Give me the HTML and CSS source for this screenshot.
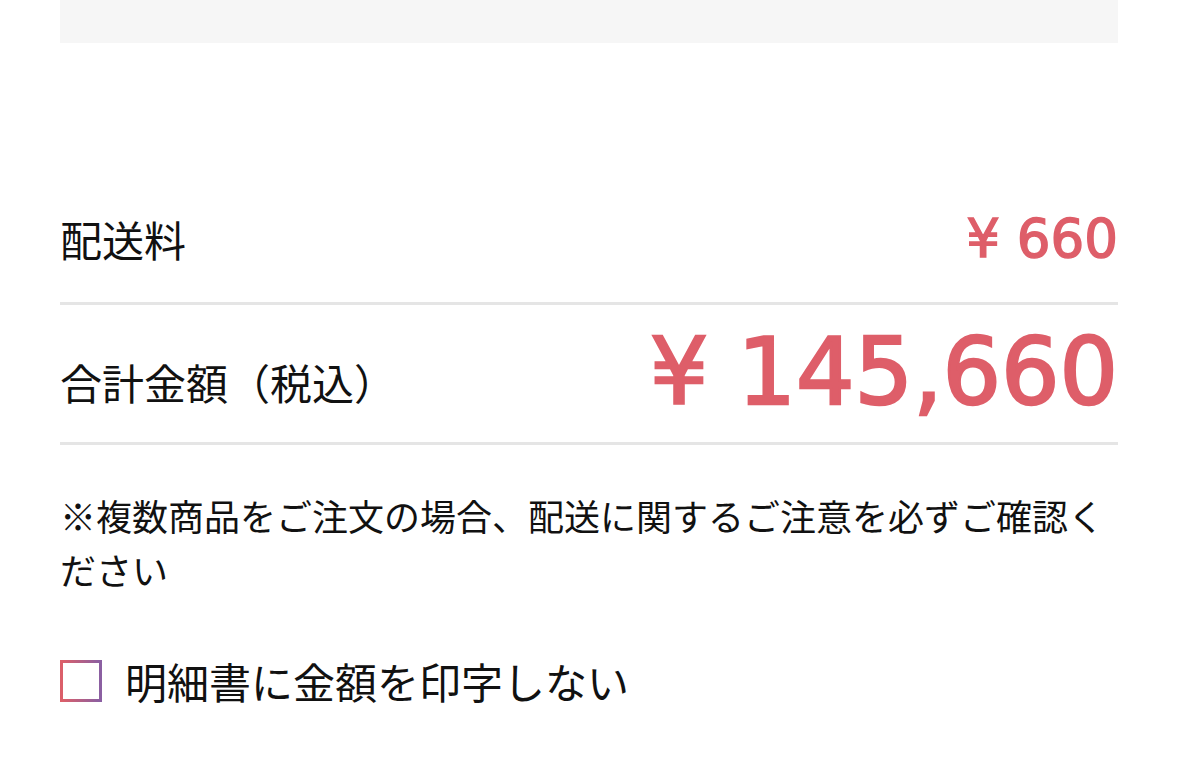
FILE: index.html
```html
<!DOCTYPE html>
<html lang="ja">
  <head>
    <meta charset="UTF-8" />
    <title>ご注文内容の確認</title>
    <link rel="stylesheet" href="styles.css">
  </head>
  <body>
    <div class="page">
      <!-- bottom of the box above -->
      <div class="upper-box"></div>

      <div class="summary">
        <div class="summary-row shipping">
          <span class="summary-label">配送料</span>
          <span class="summary-price">¥ 660</span>
        </div>
        <div class="summary-row total">
          <span class="summary-label">合計金額（税込）</span>
          <span class="summary-price">¥ 145,660</span>
        </div>
      </div>

      <p class="note">※複数商品をご注文の場合、配送に関するご注意を必ずご確認ください</p>

      <label class="print-option">
        <span class="checkbox"></span>
        <span class="print-option-text">明細書に金額を印字しない</span>
      </label>
    </div>
  </body>
</html>
```

FILE: styles.css
```css
body {
  font-family: "Noto Sans CJK JP", "Noto Sans", sans-serif;
  background: #fff;
  color: #111;
  margin: 0;
  padding: 0;
}

.page {
  margin: 0 61px 0 60px;
}

.upper-box {
  height: 43px;
  background: #f6f6f6;
}

.summary {
  margin-top: 120px;
}

.summary-row {
  display: flex;
  justify-content: space-between;
  align-items: flex-end;
  border-bottom: 3px solid #e5e5e5;
}

.summary-label {
  font-size: 42px;
  line-height: 1;
  white-space: nowrap;
}

.summary-price {
  font-family: "DejaVu Sans", sans-serif;
  color: #de5e69;
  line-height: 1;
  white-space: nowrap;
}

.shipping {
  padding: 49px 0 37px;
}

.shipping .summary-label {
  margin-bottom: 5px;
}

.shipping .summary-price {
  font-size: 53px;
  -webkit-text-stroke: 1.5px #de5e69;
}

.total {
  padding: 22px 0 23px;
}

.total .summary-label {
  margin-bottom: 16px;
}

.total .summary-price {
  font-size: 92px;
  -webkit-text-stroke: 2.5px #de5e69;
}

.note {
  margin: 43px 0 0;
  font-size: 36px;
  line-height: 54px;
}

.print-option {
  display: flex;
  align-items: center;
  gap: 23px;
  margin-top: 60px;
}

.checkbox {
  width: 36px;
  height: 36px;
  border: 3px solid;
  border-image: linear-gradient(to right, #dc5f69, #8a5fa2) 1;
}

.print-option-text {
  font-size: 42px;
  line-height: 49px;
}
```
